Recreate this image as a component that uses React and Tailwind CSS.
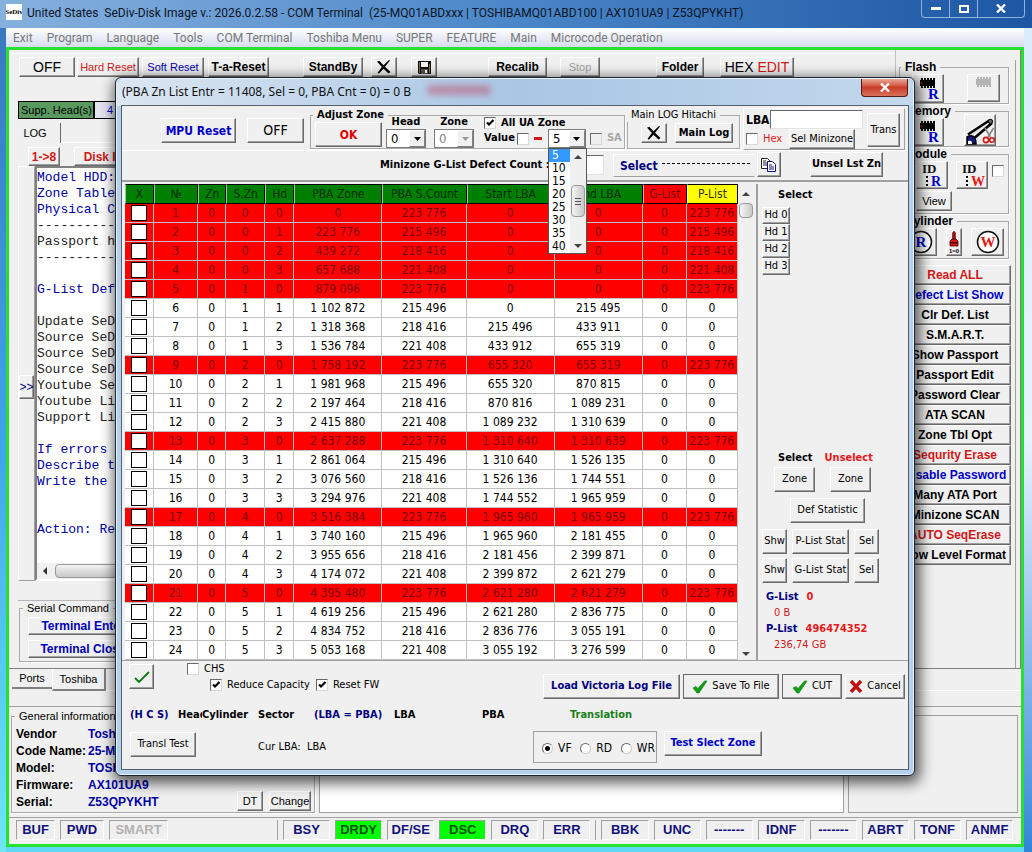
import { useState } from "react";
import clsx from "clsx";

const MENU = [
    "Exit", "Program", "Language", "Tools", "COM Terminal", "Toshiba Menu",
    "SUPER", "FEATURE", "Main", "Microcode Operation",
];

const LOG_LINES = [
    ["Model HDD:", 1], ["Zone Table", 1], ["Physical C", 1], ["-----------", 0], ["Passport h", 0], ["-----------", 0],
    ["", 0], ["G-List Def", 1], ["", 0], ["Update SeD", 0], ["Source SeD", 0], ["Source SeD", 0], ["Source SeD", 0],
    ["Youtube Se", 0], ["Youtube Li", 0], ["Support Li", 0], ["", 0], ["If errors", 1], ["Describe t", 1],
    ["Write the", 1], ["", 0], ["", 0], ["Action: Re", 1],
];

const ACTIONS = [
    ["Read ALL", "text-[#d01818]"],
    ["Defect List Show", "text-[#0000c8]"],
    ["Clr Def. List", "text-black"],
    ["S.M.A.R.T.", "text-black"],
    ["Show Passport", "text-black"],
    ["Passport Edit", "text-black"],
    ["Password Clear", "text-black"],
    ["ATA SCAN", "text-black"],
    ["Zone Tbl Opt", "text-black"],
    ["Sequrity Erase", "text-[#d01818]"],
    ["Disable Password", "text-[#0000c8]"],
    ["Many ATA Port", "text-black"],
    ["Minizone SCAN", "text-black"],
    ["AUTO SeqErase", "text-[#d01818]"],
    ["Low Level Format", "text-black"],
];

const INFO = [
    ["Vendor", "Toshiba"],
    ["Code Name:", "25-MQ01ABDxxx"],
    ["Model:", "TOSHIBAMQ01ABD100"],
    ["Firmware:", "AX101UA9"],
    ["Serial:", "Z53QPYKHT"],
];

const STATUS = ["BSY", "DRDY", "DF/SE", "DSC", "DRQ", "ERR"];
const ERRORS = ["BBK", "UNC", "-------", "IDNF", "-------", "ABRT", "TONF", "ANMF"];

const COLUMNS = [
    ["X", "w-[29px]"], ["№", "w-[44px]"], ["Zn", "w-[28px]"], ["S.Zn", "w-[39px]"], ["Hd", "w-[29px]"],
    ["PBA Zone", "w-[88px]"], ["PBA S.Count", "w-[84px]"], ["Start LBA", "w-[88px]"], ["End LBA", "w-[88px]"],
    ["G-List", "w-[44px]"], ["P-List", "w-[51px]"],
];

// [zone, super zone, head, pba, count, start lba, end lba, p-list]
const ROWS = [
    [0, 0, 0, "0", "223 776", "0", "0", "223 776"],
    [0, 0, 1, "223 776", "215 496", "0", "0", "215 496"],
    [0, 0, 2, "439 272", "218 416", "0", "0", "218 416"],
    [0, 0, 3, "657 688", "221 408", "0", "0", "221 408"],
    [0, 1, 0, "879 096", "223 776", "0", "0", "223 776"],
    [0, 1, 1, "1 102 872", "215 496", "0", "215 495", "0"],
    [0, 1, 2, "1 318 368", "218 416", "215 496", "433 911", "0"],
    [0, 1, 3, "1 536 784", "221 408", "433 912", "655 319", "0"],
    [0, 2, 0, "1 758 192", "223 776", "655 320", "655 319", "223 776"],
    [0, 2, 1, "1 981 968", "215 496", "655 320", "870 815", "0"],
    [0, 2, 2, "2 197 464", "218 416", "870 816", "1 089 231", "0"],
    [0, 2, 3, "2 415 880", "221 408", "1 089 232", "1 310 639", "0"],
    [0, 3, 0, "2 637 288", "223 776", "1 310 640", "1 310 639", "223 776"],
    [0, 3, 1, "2 861 064", "215 496", "1 310 640", "1 526 135", "0"],
    [0, 3, 2, "3 076 560", "218 416", "1 526 136", "1 744 551", "0"],
    [0, 3, 3, "3 294 976", "221 408", "1 744 552", "1 965 959", "0"],
    [0, 4, 0, "3 516 384", "223 776", "1 965 960", "1 965 959", "223 776"],
    [0, 4, 1, "3 740 160", "215 496", "1 965 960", "2 181 455", "0"],
    [0, 4, 2, "3 955 656", "218 416", "2 181 456", "2 399 871", "0"],
    [0, 4, 3, "4 174 072", "221 408", "2 399 872", "2 621 279", "0"],
    [0, 5, 0, "4 395 480", "223 776", "2 621 280", "2 621 279", "223 776"],
    [0, 5, 1, "4 619 256", "215 496", "2 621 280", "2 836 775", "0"],
    [0, 5, 2, "4 834 752", "218 416", "2 836 776", "3 055 191", "0"],
    [0, 5, 3, "5 053 168", "221 408", "3 055 192", "3 276 599", "0"],
];

function Btn({ className, children, ...rest }) {
    return (
        <button
            type="button"
            className={clsx(
                "flex shrink-0 items-center justify-center whitespace-nowrap border border-t-white border-l-white border-r-[#696969] border-b-[#696969] bg-[#f0f0f0] shadow-[inset_-1px_-1px_0_#a0a0a0]",
                className
            )}
            {...rest}
        >
            {children}
        </button>
    );
}

function Group({ label, className, legendClass = "ml-px", children }) {
    return (
        <fieldset className={clsx("min-w-0 shrink-0 border border-[#a9a9a9] shadow-[1px_1px_0_#fff]", className)}>
            <legend className={clsx("whitespace-nowrap px-1 leading-[14px]", legendClass)}>{label}</legend>
            {children}
        </fieldset>
    );
}

function Check({ label, defaultChecked, disabled, className, labelClass, ...rest }) {
    return (
        <label className={clsx("flex items-center gap-[5px] whitespace-nowrap", className)}>
            <span className="relative block size-3">
                <input
                    type="checkbox"
                    defaultChecked={defaultChecked}
                    disabled={disabled}
                    className="peer block size-3 appearance-none border border-t-[#696969] border-l-[#696969] border-r-[#d8d8d8] border-b-[#d8d8d8] bg-white disabled:bg-[#f0f0f0]"
                    {...rest}
                />
                <svg viewBox="0 0 12 12" className="pointer-events-none absolute inset-0 hidden size-3 peer-checked:block">
                    <path d="M3 5.5 5 7.5 9.5 3" fill="none" stroke="#000" strokeWidth="2.2" />
                </svg>
            </span>
            {label && <span className={labelClass}>{label}</span>}
        </label>
    );
}

function Combo({ label, value, disabled, className }) {
    return (
        <span className={clsx("relative block h-[19px] border border-[#7a7a7a] bg-white", className)}>
            <select
                aria-label={label}
                disabled={disabled}
                defaultValue={value}
                className="block h-full w-full appearance-none pl-1 text-[13px] leading-4 text-black disabled:text-[#808080]"
            >
                <option value={value}>{value}</option>
            </select>
            <span className="pointer-events-none absolute inset-y-0 right-0 flex w-4 items-center justify-center border border-t-white border-l-white border-r-[#808080] border-b-[#808080] bg-[#f0f0f0]">
                <svg viewBox="0 0 7 4" className="h-1 w-[7px]">
                    <path d="M0 0h7L3.5 4z" fill={disabled ? "#999" : "#000"} />
                </svg>
            </span>
        </span>
    );
}

function Arrow({ up, className }) {
    return (
        <svg viewBox="0 0 8 4" className={clsx("h-1 w-2", className)}>
            <path d={up ? "M0 4h8L4 0z" : "M0 0h8L4 4z"} fill="#444" />
        </svg>
    );
}

function CrossIcon() {
    return (
        <svg viewBox="0 0 16 14" className="h-[14px] w-4">
            <path d="M1 1.5 3.500 1 7.500 5.200 13 0l1 .5-5 6.300L14.500 12 12.500 13.500 7.500 8.800 3 13.500 1.500 13 5.800 7z" fill="#000" />
        </svg>
    );
}

function FloppyIcon() {
    return (
        <svg viewBox="0 0 13 13" className="size-[13px]">
            <path d="M0 0h13v13H1L0 12z" fill="#111" />
            <path d="M3 1h7v5H3z" fill="#f4f4f4" />
            <path d="M1 1h1v11H1zM11 3h1v9h-1z" fill="#77773a" />
            <path d="M3 8h7v5H3z" fill="#555" />
            <path d="M7 9h2v3H7z" fill="#fff" />
        </svg>
    );
}

function ChipIcon({ letter, gray }) {
    const c = gray ? "#b4b4b4" : "#000";
    return (
        <svg viewBox="0 0 28 26" className="h-[26px] w-7">
            <path
                d="M6 4h15v6H6zM7 2h2v10H7zM10 2h2v10h-2zM13 2h2v10h-2zM16 2h2v10h-2zM19 2h2v10h-2z"
                fill={c}
            />
            {!gray && <circle cx="7.500" cy="7" r="1" fill="#c00" />}
            {letter && (
                <text x="14" y="23" fontSize="15" fontWeight="bold" fontFamily="Liberation Serif, serif" fill="#0000c8">
                    {letter}
                </text>
            )}
        </svg>
    );
}

function IdIcon({ letter, color }) {
    return (
        <svg viewBox="0 0 30 26" className="h-[26px] w-[30px]" fontFamily="Liberation Serif, serif">
            <text x="5" y="11" fontSize="13" fill="#111">ID</text>
            <path d="M9 14h2v2H9zM9 18h2v2H9zM9 22h2v2H9z" fill="#000" />
            <text x="14" y="24" fontSize="14" fontWeight="bold" fill={color}>{letter}</text>
        </svg>
    );
}

function CircleIcon({ letter, color }) {
    return (
        <svg viewBox="0 0 24 24" className="size-6">
            <circle cx="12" cy="12" r="10.500" fill="#fff" stroke="#111" strokeWidth="1.500" />
            <text x="12" y="17" textAnchor="middle" fontSize="15" fontWeight="bold" fontFamily="Liberation Serif, serif" fill={color}>
                {letter}
            </text>
        </svg>
    );
}

function CutMemoryIcon() {
    return (
        <svg viewBox="0 0 30 30" className="h-[30px] w-[30px]">
            <path d="M2 22c5-3 9-1 9 7H2z" fill="#101a80" stroke="#000" strokeWidth="1.500" />
            <path d="M3 26c3-1 4 0 4 3H3z" fill="#fff" />
            <path d="M3 19.500 25 5M10 22.500 27 8" stroke="#000" strokeWidth="2.600" />
            <path d="M7 20 26 6.500" stroke="#ddd" strokeWidth="1" />
            <circle cx="25.500" cy="6.500" r="2.200" fill="#666" stroke="#000" />
            <path d="m20 13 5.500 9M28.500 13l-5.500 9" stroke="#888" strokeWidth="1.600" />
            <circle cx="21" cy="25" r="2.600" fill="none" stroke="#d01818" strokeWidth="1.600" />
            <circle cx="27" cy="25" r="2.300" fill="none" stroke="#d01818" strokeWidth="1.600" />
        </svg>
    );
}

function BottleIcon() {
    return (
        <svg viewBox="0 0 14 24" className="h-6 w-[14px]">
            <path d="M5.500 3 7 1l1.500 2v7h-3z" fill="#a01010" stroke="#400" strokeWidth=".5" />
            <path d="M5 9h4l2 2v5H3v-5z" fill="#d01818" stroke="#400" strokeWidth=".8" />
            <path d="M3 12h8v1.500H3z" fill="#500" />
            <text x="7" y="23" textAnchor="middle" fontSize="6" fontWeight="bold" fontFamily="Liberation Sans, sans-serif" fill="#000">
                1=0
            </text>
        </svg>
    );
}

function CopyIcon() {
    return (
        <svg viewBox="0 0 16 14" className="h-[14px] w-4">
            <path d="M.5.5h6l3 3v7h-9z" fill="#fff" stroke="#222" />
            <path d="M2 3h3M2 5h5M2 7h5" stroke="#222" />
            <path d="M6.500 3.500h5l3 3v7h-8z" fill="#fff" stroke="#10107a" />
            <path d="M8 7h3M8 9h5M8 11h5" stroke="#10107a" />
        </svg>
    );
}

function TickIcon({ thin }) {
    return (
        <svg viewBox="0 0 16 14" className="h-[14px] w-4">
            {thin ? (
                <path d="M1 8 5 12 15 2" fill="none" stroke="#0a7a14" strokeWidth="1.800" />
            ) : (
                <path d="M1 8l3-1.500 2 2L12.500 1H15L7 13H5z" fill="#12a012" stroke="#0a7a14" strokeWidth=".6" />
            )}
        </svg>
    );
}

function TitleBar() {
    return (
        <header className="flex h-7 items-start bg-linear-to-r from-[#86b0de] via-[#4a86c8] to-[#1d56a2] pl-[6px] font-['Roboto',sans-serif]">
            <span className="mt-1 flex size-4 items-center justify-center overflow-hidden bg-white font-['Liberation_Serif',serif] text-[7px] font-bold text-black">
                SeDiv
            </span>
            <h1 className="ml-[5px] mt-1 grow whitespace-pre text-[12px] leading-[18px] text-[#0b1526]">
                {"United States  SeDiv-Disk Image v.: 2026.0.2.58 - COM Terminal  (25-MQ01ABDxxx | TOSHIBAMQ01ABD100 | AX101UA9 | Z53QPYKHT)"}
            </h1>
            <div className="mr-[7px] flex h-[18px] rounded-b border border-t-0 border-[#8fb3dc]">
                <button aria-label="Minimize" className="flex w-7 items-center justify-center border-r border-[#8fb3dc]">
                    <span className="block h-[3px] w-[10px] bg-white" />
                </button>
                <button aria-label="Maximize" className="flex w-7 items-center justify-center border-r border-[#8fb3dc]">
                    <span className="block h-2 w-[10px] border-2 border-white" />
                </button>
                <button aria-label="Close" className="flex w-[46px] items-center justify-center">
                    <svg viewBox="0 0 10 9" className="h-[9px] w-[10px]">
                        <path d="M1 .5 9 8.500M9 .5 1 8.500" stroke="#fff" strokeWidth="2.400" />
                    </svg>
                </button>
            </div>
        </header>
    );
}

function Toolbar() {
    return (
        <div className="mt-[3px] flex border-t border-white pl-[10px] pt-[3px] text-[12px] font-bold text-black">
            <Btn className="h-5 w-14 text-[14px] font-normal">OFF</Btn>
            <Btn className="ml-[2px] h-5 w-[62px] text-[11px] font-normal text-[#d01818]">Hard Reset</Btn>
            <Btn className="ml-[3px] h-5 w-[62px] text-[11px] font-normal text-[#0000b4]">Soft Reset</Btn>
            <Btn className="ml-1 h-5 w-[61px]">T-a-Reset</Btn>
            <Btn className="ml-[34px] h-5 w-[60px]">StandBy</Btn>
            <Btn aria-label="Stop" className="ml-2 h-5 w-[26px]"><CrossIcon /></Btn>
            <Btn aria-label="Save" className="ml-[14px] h-5 w-[26px]"><FloppyIcon /></Btn>
            <Btn className="ml-[51px] h-5 w-[59px]">Recalib</Btn>
            <Btn disabled className="ml-[13px] h-5 w-10 text-[11px] font-normal text-[#a0a0a0]">Stop</Btn>
            <Btn className="ml-14 h-5 w-12">Folder</Btn>
            <Btn className="ml-4 h-5 w-[74px] whitespace-pre text-[14px] font-normal">
                HEX <span className="text-[#d01818]">EDIT</span>
            </Btn>
        </div>
    );
}

function LogPane() {
    return (
        <div className="flex grow flex-col pl-[9px]">
            <div className="mt-6 flex h-[18px] shrink-0 text-[11px] leading-4">
                <span className="w-[76px] whitespace-nowrap border border-black bg-[#5a9a5f] pl-[2px] text-black">Supp. Head(s)</span>
                <span className="w-[60px] border border-black bg-[#e4e4f0] pl-3 text-[#0000c8]">4</span>
            </div>
            <div className="mt-1 flex h-5 shrink-0">
                <button className="w-[43px] border-r border-[#696969] pr-2 text-[11px] text-black">LOG</button>
                <span className="grow border-b border-white" />
            </div>
            <div className="flex grow flex-col">
                <div className="flex shrink-0 pl-[10px] pt-1 text-[12px] font-bold text-[#d01818]">
                    <Btn className="h-[19px] w-8">{"1->8"}</Btn>
                    <Btn className="ml-[14px] h-[19px] w-[70px]">Disk Info</Btn>
                </div>
                <div className="flex grow">
                    <div className="flex w-[17px] flex-col border border-t-white border-l-white border-r-[#a0a0a0] border-b-[#a0a0a0]">
                        <Btn className="mt-[208px] h-6 w-[15px] text-[12px] text-[#000080]">{">>"}</Btn>
                    </div>
                    <div className="flex w-[400px] flex-col border-2 border-t-[#808080] border-l-[#808080] border-r-white border-b-white bg-white pt-[2px]">
                        <pre className="grow font-['Liberation_Mono',monospace] text-[13px] leading-4">
                            {LOG_LINES.map(([text, blue], i) => (
                                <div key={i} className={clsx("h-4", blue ? "text-[#0000a0]" : "text-[#222]")}>{text}</div>
                            ))}
                        </pre>
                        <div className="flex h-4 items-center bg-[#f0f0f0] pl-[6px]">
                            <svg viewBox="0 0 4 8" className="h-2 w-1"><path d="M4 0v8L0 4z" fill="#333" /></svg>
                            <span className="ml-2 h-[14px] grow rounded-sm border border-[#999] bg-linear-to-b from-[#f4f4f4] to-[#c8c8c8]" />
                        </div>
                    </div>
                </div>
            </div>
            <div className="mt-[19px] border-t border-[#b8b8b8] pb-[6px]">
                <Group label="Serial Command" className="ml-px w-[400px] px-2 pb-[3px] text-[11px] text-black" legendClass="-ml-[5px]">
                    <Btn className="mt-[2px] h-[18px] w-[110px] text-[12px] font-bold text-[#0000b4]">Terminal Enter</Btn>
                    <Btn className="mt-[5px] h-[18px] w-[110px] text-[12px] font-bold text-[#0000b4]">Terminal Close</Btn>
                </Group>
            </div>
        </div>
    );
}

function SideColumn() {
    return (
        <aside className="flex w-[125px] shrink-0 flex-col border-r border-[#808080] pl-[3px] pr-1 pt-[10px] text-[12px] font-bold text-black">
            <div className="flex grow flex-col border-r border-[#a0a0a0]">
                <Group label="Flash" className="mr-[6px] h-11">
                    <div className="flex justify-between pl-3 pr-2">
                        <Btn aria-label="Read flash" className="h-[29px] w-8"><ChipIcon letter="R" /></Btn>
                        <Btn aria-label="Write flash" disabled className="h-[28px] w-[33px]"><ChipIcon gray /></Btn>
                    </div>
                </Group>
                <Group label="Memory" className="mr-[6px] h-[43px]">
                    <div className="flex items-end justify-between pl-3 pr-3">
                        <Btn aria-label="Read memory" className="h-7 w-8"><ChipIcon letter="R" /></Btn>
                        <Btn aria-label="Cut memory" className="-mt-1 h-8 w-8"><CutMemoryIcon /></Btn>
                    </div>
                </Group>
                <Group label="Module" className="mr-[6px] h-[67px]">
                    <div className="flex pl-4">
                        <Btn aria-label="Read module" className="h-7 w-8"><IdIcon letter="R" color="#0000c8" /></Btn>
                        <Btn aria-label="Write module" className="ml-2 h-7 w-8"><IdIcon letter="W" color="#e01818" /></Btn>
                        <Check aria-label="Module write" className="mb-2 ml-1" />
                    </div>
                    <Btn className="ml-4 mt-[2px] h-5 w-9 text-[11px] font-normal">View</Btn>
                </Group>
                <Group label="Cylinder" className="mr-[6px] h-[45px]">
                    <div className="flex justify-between pl-1 pr-1">
                        <Btn aria-label="Read cylinder" className="h-7 w-[33px]"><CircleIcon letter="R" color="#0000c8" /></Btn>
                        <Btn aria-label="Reset cylinder" className="h-7 w-4"><BottleIcon /></Btn>
                        <Btn aria-label="Write cylinder" className="h-7 w-[33px]"><CircleIcon letter="W" color="#e01818" /></Btn>
                    </div>
                </Group>
                <div className="mt-[6px] flex flex-col pr-1">
                    {ACTIONS.map(([label, color]) => (
                        <Btn key={label} className={clsx("h-5", color)}>{label}</Btn>
                    ))}
                </div>
            </div>
        </aside>
    );
}

function StatusCell({ label, className = "min-w-0 flex-1", color }) {
    const on = label === "DRDY" || label === "DSC";
    return (
        <li
            className={clsx(
                "flex items-center justify-center border border-t-[#a0a0a0] border-l-[#a0a0a0] border-r-white border-b-white",
                className,
                on ? "bg-[#00ff00] text-[#005000]" : color || "text-[#10107a]"
            )}
        >
            {label}
        </li>
    );
}

function BottomArea() {
    return (
        <>
            <div className="flex h-[38px] shrink-0 items-start border-b border-[#a0a0a0] pl-[3px] text-[11px] text-black">
                <button className="mt-px h-[19px] w-10 border-b-2 border-[#808080]">Ports</button>
                <button className="h-[22px] w-[54px] border-b-2 border-r-2 border-l border-l-white border-[#808080]">Toshiba</button>
                <span className="mt-[21px] grow border-t border-white" />
            </div>
            <div className="flex shrink-0 pb-1 pl-[2px] pr-[3px] pt-[2px]">
                <Group label="General information" className="h-[104px] w-[304px] pl-1 text-[11px]" legendClass="-ml-px">
                    <div className="flex pt-[3px]">
                        <dl className="grid grid-cols-[72px_1fr] text-[12px] font-bold leading-[17px]">
                            {INFO.map(([k, v]) => (
                                <div key={k} className="contents">
                                    <dt className="whitespace-nowrap text-black">{k}</dt>
                                    <dd className="text-[#0000a8]">{v}</dd>
                                </div>
                            ))}
                        </dl>
                        <div className="ml-auto flex items-end gap-[6px] pr-[3px]">
                            <Btn className="h-5 w-[26px]">DT</Btn>
                            <Btn className="h-5 w-[42px]">Change</Btn>
                        </div>
                    </div>
                </Group>
                <div className="ml-1 mt-[6px] grow border border-[#a0a0a0] bg-white" />
                <div className="ml-1 mt-[6px] w-[170px] border border-[#a0a0a0]" />
            </div>
            <ul className="flex h-[27px] shrink-0 gap-[5px] border-t border-[#a0a0a0] pb-1 pl-[7px] pr-2 pt-[2px] text-[13px] font-bold">
                <StatusCell label="BUF" className="w-[39px]" />
                <StatusCell label="PWD" className="w-11" />
                <StatusCell label="SMART" className="mr-[108px] w-[59px]" color="text-[#b0b0b0]" />
                <li className="-ml-1 w-px bg-[#a0a0a0]" />
                {STATUS.map((s) => <StatusCell key={s} label={s} />)}
                <li className="w-px bg-[#a0a0a0]" />
                {ERRORS.map((s, i) => <StatusCell key={i} label={s} />)}
            </ul>
        </>
    );
}

function DialogHeader() {
    const [size, setSize] = useState(5);

    return (
        <div className="flex h-[45px] shrink-0 items-start border-b border-white text-[11px] text-black">
            <Btn className="ml-[39px] mt-3 h-[25px] w-[75px] text-[12px] font-bold text-[#0000c8]">MPU Reset</Btn>
            <Btn className="ml-[11px] mt-3 h-[25px] w-[57px] text-[14px]">OFF</Btn>
            <Group label="Adjust Zone" className="ml-[6px] mt-[2px] h-[41px] w-[315px] font-bold" legendClass="ml-[2px]">
                <div className="-mt-[6px] flex items-start pl-1">
                    <Btn className="mt-[6px] h-[25px] w-[67px] text-[12px] text-[#e00000]">OK</Btn>
                    <div className="ml-1 w-10 text-center leading-3">
                        Head
                        <Combo label="Head" value="0" className="mt-px font-normal" />
                    </div>
                    <div className="ml-2 w-10 text-center leading-3">
                        Zone
                        <Combo label="Zone" value="0" disabled className="mt-px font-normal" />
                    </div>
                    <div className="ml-[10px] mt-px flex flex-col">
                        <Check label="All UA Zone" defaultChecked className="h-3" />
                        <div className="flex h-[19px] items-center">
                            <label htmlFor="use-value" className="mr-[2px]">Value</label>
                            <Check id="use-value" />
                            <span className="ml-[5px] h-[3px] w-2 bg-[#d01818]" />
                            <div className="relative ml-[6px]">
                                <Combo label="Value" value="5" className="w-[38px] font-normal" />
                                <div className="absolute left-0 top-[19px] z-10 flex w-[39px] border border-[#555] bg-white font-normal">
                                    <ul role="listbox" aria-label="Value" className="grow">
                                        {[5, 10, 15, 20, 25, 30, 35, 40].map((n) => (
                                            <li
                                                key={n}
                                                role="option"
                                                aria-selected={n === size}
                                                onClick={() => setSize(n)}
                                                className={clsx("h-[13px] pl-[3px] text-[12px] leading-[13px]", n === size && "bg-[#3399ff] text-white")}
                                            >
                                                {n}
                                            </li>
                                        ))}
                                    </ul>
                                    <div className="flex w-4 flex-col items-center bg-[#f0f0f0]">
                                        <Arrow up className="mt-[6px]" />
                                        <span className="mt-[26px] flex h-8 w-[14px] flex-col items-center justify-center gap-[2px] rounded-sm border border-[#999] bg-linear-to-r from-[#f4f4f4] to-[#c8c8c8]">
                                            <i className="h-px w-[6px] bg-[#555]" />
                                            <i className="h-px w-[6px] bg-[#555]" />
                                            <i className="h-px w-[6px] bg-[#555]" />
                                        </span>
                                        <Arrow className="mb-[5px] mt-auto" />
                                    </div>
                                </div>
                            </div>
                            <Check label="SA" disabled className="ml-1" labelClass="text-[#a8a8a8]" />
                        </div>
                    </div>
                </div>
            </Group>
            <Group label="Main LOG Hitachi" className="ml-[2px] mt-[2px] h-[41px] w-[113px]" legendClass="-ml-px">
                <div className="flex gap-2 pl-[13px] pt-px">
                    <Btn aria-label="Clear log" className="h-5 w-[26px]"><CrossIcon /></Btn>
                    <Btn className="h-5 w-[58px] font-bold">Main Log</Btn>
                </div>
            </Group>
            <div className="ml-[3px] mr-[3px] mt-[2px] flex h-[42px] grow border border-t-white border-l-white border-r-[#a0a0a0] border-b-[#a0a0a0] pl-[2px]">
                <div className="flex grow flex-col">
                    <div className="mt-px flex items-center">
                        <label htmlFor="lba" className="w-6 text-[12px] font-bold">LBA</label>
                        <input id="lba" className="h-[19px] w-0 grow border border-t-[#696969] border-l-[#696969] border-r-[#e3e3e3] border-b-[#e3e3e3] bg-white px-1" />
                    </div>
                    <div className="flex items-center justify-between pr-2">
                        <Check label="Hex" labelClass="text-[#e01818]" />
                        <Btn className="h-5 w-[66px]">Sel Minizone</Btn>
                    </div>
                </div>
                <Btn className="ml-1 mr-1 mt-1 h-[34px] w-[33px]">Trans</Btn>
            </div>
        </div>
    );
}

function ZoneTable() {
    return (
        <div className="flex min-w-0 grow overflow-hidden border-r-2 border-[#a0a0a0]">
            <div className="ml-[3px] min-w-0 grow overflow-hidden">
                <table className="w-full table-fixed border-separate border-spacing-0 text-[12px] leading-[18px]">
                    <thead>
                        <tr className="h-[19px]">
                            {COLUMNS.map(([name, width]) => (
                                <th
                                    key={name}
                                    className={clsx(
                                        width,
                                        "whitespace-nowrap border border-black border-l-white/60 p-0 font-normal",
                                        name === "G-List" ? "bg-[#ff0000] text-[#700000]" : name === "P-List" ? "bg-[#ffff00] text-[#303000]" : "bg-[#008000] text-[#002c00]"
                                    )}
                                >
                                    {name}
                                </th>
                            ))}
                        </tr>
                    </thead>
                    <tbody>
                        {ROWS.map(([zn, szn, hd, pba, count, start, end, plist], i) => {
                            const bad = hd === 0 || i < 5;
                            return (
                                <tr key={i} className={clsx("h-[19px]", bad ? "bg-[#ff0000] text-[#7a0000]" : "bg-white text-black")}>
                                    <td className="border-b border-r border-[#c0c0c0] p-0">
                                        <input
                                            type="checkbox"
                                            aria-label={`Select zone ${i + 1}`}
                                            className="mx-auto block size-4 appearance-none border border-black bg-white checked:bg-black"
                                        />
                                    </td>
                                    {[i + 1, zn, szn, hd, pba, count, start, end, 0, plist].map((v, c) => (
                                        <td key={c} className="whitespace-nowrap border-b border-r border-[#c0c0c0] p-0 text-center">{v}</td>
                                    ))}
                                </tr>
                            );
                        })}
                    </tbody>
                </table>
            </div>
            <div className="flex w-[18px] shrink-0 flex-col items-center bg-[#f0f0f0] pr-[2px]">
                <Arrow up className="mt-2" />
                <span className="mt-[7px] h-[15px] w-[14px] rounded-sm border border-[#999] bg-linear-to-r from-[#f8f8f8] to-[#c8c8c8]" />
                <Arrow className="mb-1 mt-auto" />
            </div>
        </div>
    );
}

function SelectPanel() {
    return (
        <div className="flex w-[150px] shrink-0 flex-col pl-1 text-[11px] text-black">
            <h2 className="ml-4 mt-[3px] text-[11px] font-bold leading-4">Select</h2>
            <div className="mt-1 flex flex-col">
                {[0, 1, 2, 3].map((n) => (
                    <Btn key={n} className="h-[17px] w-7">Hd {n}</Btn>
                ))}
            </div>
            <div className="mb-[7px] mt-auto">
                <div className="ml-[14px] flex gap-3 font-bold leading-4">
                    <span className="ml-[2px]">Select</span>
                    <span className="text-[#e81818]">Unselect</span>
                </div>
                <div className="ml-3 mt-px flex gap-[15px]">
                    <Btn className="h-[25px] w-[41px]">Zone</Btn>
                    <Btn className="h-[25px] w-[41px]">Zone</Btn>
                </div>
                <Btn className="ml-7 mt-[6px] h-[25px] w-[75px]">Def Statistic</Btn>
                {["P-List Stat", "G-List Stat"].map((name) => (
                    <div key={name} className="mt-[6px] flex gap-[5px] last-of-type:mt-1">
                        <Btn className="h-[25px] w-[25px]">Shw</Btn>
                        <Btn className="h-[25px] w-[57px]">{name}</Btn>
                        <Btn className="h-[25px] w-[25px]">Sel</Btn>
                    </div>
                ))}
                <p className="ml-1 mt-[6px] flex gap-2 font-bold leading-4 text-[#000080]">
                    G-List <span className="text-[#e81818]">0</span>
                </p>
                <p className="ml-3 leading-4 text-[#d01818]">0 B</p>
                <p className="ml-1 flex gap-2 font-bold leading-4 text-[#000080]">
                    P-List <span className="text-[#e81818]">496474352</span>
                </p>
                <p className="ml-3 leading-4 text-[#d01818]">236,74 GB</p>
            </div>
        </div>
    );
}

function DialogFooter() {
    return (
        <div className="flex h-[109px] shrink-0 flex-col border-t border-[#a0a0a0] text-[11px] text-black">
            <div className="flex items-start pl-[7px] pr-[3px]">
                <Btn aria-label="Apply" className="mt-[3px] h-[25px] w-[25px]"><TickIcon thin /></Btn>
                <div className="ml-[33px]">
                    <Check label="CHS" className="h-4" />
                    <div className="ml-[23px] flex gap-[6px]">
                        <Check label="Reduce Capacity" defaultChecked className="h-4" />
                        <Check label="Reset FW" defaultChecked className="h-4" />
                    </div>
                </div>
                <div className="ml-auto mt-[13px] flex gap-[3px]">
                    <Btn className="h-[25px] w-[137px] font-bold text-[#000080]">Load Victoria Log File</Btn>
                    <Btn className="h-[25px] w-24 gap-1 outline outline-1 -outline-offset-1 outline-[#696969]"><TickIcon />Save To File</Btn>
                    <Btn className="h-[25px] w-[60px] gap-1 outline outline-1 -outline-offset-1 outline-[#696969]"><TickIcon />CUT</Btn>
                    <Btn className="h-[25px] w-[60px] gap-1">
                        <svg viewBox="0 0 14 13" className="h-[13px] w-[14px]">
                            <path d="M2 1 12 12M12 1 2 12" stroke="#c01010" strokeWidth="3.400" />
                        </svg>
                        Cancel
                    </Btn>
                </div>
            </div>
            <div className="mt-2 grid grid-cols-[48px_24px_56px_56px_80px_88px_88px_1fr] pl-2 font-bold leading-4">
                <span className="text-[#000080]">(H C S)</span>
                <span className="overflow-hidden">Head</span>
                <span>Cylinder</span>
                <span>Sector</span>
                <span className="whitespace-nowrap text-[#000080]">(LBA = PBA)</span>
                <span>LBA</span>
                <span>PBA</span>
                <span className="text-[#188018]">Translation</span>
            </div>
            <div className="mt-2 flex items-start pl-2">
                <Btn className="mt-px h-[25px] w-[66px]">Transl Test</Btn>
                <p className="ml-[62px] mt-2 whitespace-pre leading-4">{"Cur LBA:  LBA"}</p>
                <div className="ml-auto flex h-8 w-[124px] items-center justify-between border border-[#a0a0a0] pl-2 pr-px pt-[2px] text-[12px]">
                    {["VF", "RD", "WR"].map((mode) => (
                        <label key={mode} className="flex items-center gap-[5px]">
                            <input
                                type="radio"
                                name="mode"
                                defaultChecked={mode === "VF"}
                                className="size-[11px] appearance-none rounded-full border border-t-[#696969] border-l-[#696969] border-r-[#ccc] border-b-[#ccc] bg-white checked:bg-[radial-gradient(circle,#000_2px,#fff_3px)]"
                            />
                            {mode}
                        </label>
                    ))}
                </div>
                <Btn className="ml-[7px] mr-[146px] h-[25px] w-[98px] font-bold text-[#0000c8]">Test Slect Zone</Btn>
            </div>
        </div>
    );
}

function ZoneDialog() {
    return (
        <section
            role="dialog"
            aria-label="PBA Zone List"
            className="absolute left-[115px] top-[77px] flex h-[699px] w-[800px] flex-col rounded-md border border-[#1c2733] bg-[#b4d0ec] px-[6px] pb-[6px] font-['DejaVu_Sans_Condensed','DejaVu_Sans',sans-serif] shadow-[2px_4px_14px_3px_rgba(0,0,0,0.65),inset_0_0_0_1px_rgba(255,255,255,0.7)]"
        >
            <div className="-mx-[5px] mt-px flex h-[27px] shrink-0 items-start rounded-t-md bg-linear-to-r from-[#dbe6f1] via-[#a9c6e5] to-[#c3d8ec] pl-[5px] font-['Noto_Sans','Open_Sans',sans-serif]">
                <h2 className="mt-1 text-[12px] leading-[18px] text-[#111]">
                    (PBA Zn List Entr = 11408, Sel = 0, PBA Cnt = 0) = 0 B
                </h2>
                <span aria-hidden="true" className="ml-4 mt-[6px] h-[10px] w-16 rounded bg-[#c0506a]/50 blur-[3px]" />
                <button
                    aria-label="Close"
                    className="ml-auto mr-[5px] flex h-[18px] w-[47px] items-center justify-center rounded-b border border-t-0 border-[#5a1a1a] bg-linear-to-b from-[#e8a898] via-[#c83c28] to-[#d8705c]"
                >
                    <svg viewBox="0 0 10 9" className="h-[9px] w-[10px]">
                        <path d="M1 .5 9 8.500M9 .5 1 8.500" stroke="#fff" strokeWidth="2.400" />
                    </svg>
                </button>
            </div>
            <div className="flex grow flex-col bg-[#f0f0f0] outline outline-1 outline-[#55606c]">
                <DialogHeader />
                <div className="flex h-[31px] shrink-0 items-start border-b-2 border-[#a0a0a0] text-[11px] text-black">
                    <label htmlFor="minizone" className="ml-[258px] mt-[6px] w-[172px] whitespace-nowrap font-bold leading-4">
                        Minizone G-List Defect Count :
                    </label>
                    <input id="minizone" className="mt-1 h-5 w-[52px] border border-t-[#696969] border-l-[#696969] border-r-[#e3e3e3] border-b-[#e3e3e3] bg-white px-1" />
                    <button className="ml-[9px] mt-[3px] flex h-[23px] w-[142px] items-center gap-1 overflow-hidden border border-t-white border-l-white border-r-transparent border-b-[#a0a0a0] pl-[6px] text-[12px]">
                        <span className="font-bold text-[#000080]">Select</span>
                        <span className="mb-1 h-0 w-[88px] border-t border-dashed border-black" />
                    </button>
                    <Btn aria-label="Copy" className="ml-[2px] mt-px h-[25px] w-6"><CopyIcon /></Btn>
                    <Btn className="ml-[29px] mt-px h-[25px] w-[73px] font-bold">Unsel Lst Zn</Btn>
                </div>
                <div className="flex min-h-0 grow pt-[2px]">
                    <ZoneTable />
                    <SelectPanel />
                </div>
                <DialogFooter />
            </div>
        </section>
    );
}

function App() {
    return (
        <div className="relative flex min-h-screen flex-col overflow-hidden bg-[#5fd8f4] font-['Liberation_Sans',Arial,sans-serif]">
            <TitleBar />
            <div className="flex grow">
                <div className="w-[6px] shrink-0 bg-linear-to-b from-[#3a78c0] via-[#3fa4ea] to-[#6fe6f6]" />
                <div className="mb-[5px] flex min-w-0 grow flex-col">
                    <nav className="flex h-[19px] shrink-0 items-center gap-[14px] bg-linear-to-b from-white to-[#d6dcee] pl-[7px] font-['Roboto',sans-serif] text-[12px] text-[#777]">
                        {MENU.map((m) => <a key={m} href="#" className="whitespace-nowrap">{m}</a>)}
                    </nav>
                    <main className="flex grow flex-col border-[3px] border-[#28e030] bg-[#f0f0f0]">
                        <div className="flex grow border-b border-[#808080]">
                            <div className="flex min-w-0 grow flex-col overflow-hidden border-r border-[#c0c0c0]">
                                <Toolbar />
                                <LogPane />
                            </div>
                            <SideColumn />
                        </div>
                        <BottomArea />
                    </main>
                </div>
                <div className="w-2 shrink-0 bg-linear-to-b from-[#d8ecfa] via-[#e8f4fc] to-[#2f86d8]" />
            </div>
            <ZoneDialog />
        </div>
    );
}

export default App;
